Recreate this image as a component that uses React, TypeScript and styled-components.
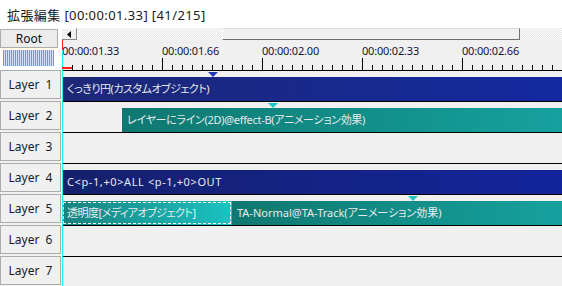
import React from "react"
import styled, { createGlobalStyle } from "styled-components"

const GlobalStyle = createGlobalStyle`
	html, body {
		margin: 0;
		padding: 0;
		background: #f0f0f0;
	}
	body {
		font-family: "Noto Sans", "Noto Sans CJK JP", sans-serif;
		font-size: 12px;
		color: #000;
	}
`

const Window = styled.div`
	position: relative;
	width: 562px;
	height: 286px;
	overflow: hidden;
	background: #f0f0f0;
	display: flex;
	flex-direction: column;
`

const TitleBar = styled.div`
	height: 28px;
	flex-shrink: 0;
	background: #fff;
	display: flex;
	align-items: center;
	padding-left: 7px;
	font-size: 13px;
	letter-spacing: 0.4px;
	color: #1a1a1a;
`

const Header = styled.div`
	display: grid;
	grid-template-columns: 62px 1fr;
	height: 42px;
	flex-shrink: 0;
`

const HeadLeft = styled.div`
	background: #fff;
	display: flex;
	flex-direction: column;
	padding-top: 1px;
`

const RootButton = styled.div`
	width: 58px;
	height: 19px;
	box-sizing: border-box;
	border: 1px solid #adadad;
	background: #ececec;
	display: flex;
	align-items: center;
	justify-content: center;
	font-size: 12px;
	color: #111;
`

const ScaleStripes = styled.div`
	margin: 2px 0 0 3px;
	width: 51px;
	height: 16px;
	background: repeating-linear-gradient(90deg, #6a9ae4 0 1px, #d6e3f7 1px 2px);
`

const HeadRight = styled.div`
	display: flex;
	flex-direction: column;
	background: #f0f0f0;
`

const ScrollBar = styled.div`
	height: 12px;
	display: flex;
	background: repeating-conic-gradient(#e9e9e9 0 25%, #fbfbfb 0 50%) 0 0 / 2px 2px;
`

const ArrowButton = styled.div`
	width: 15px;
	box-sizing: border-box;
	background: #f0f0f0;
	border-right: 1px solid #8a8a8a;
	border-bottom: 1px solid #8a8a8a;
	border-top: 1px solid #fff;
	display: flex;
	align-items: center;
	justify-content: center;
`

const Thumb = styled.div<{ $left: number; $width: number }>`
	margin-left: ${(p) => p.$left}px;
	width: ${(p) => p.$width}px;
	box-sizing: border-box;
	background: #f0f0f0;
	border-top: 1px solid #dcdcdc;
	border-left: 1px solid #fff;
	border-right: 1px solid #707070;
	border-bottom: 1px solid #707070;
`

const Ruler = styled.div`
	position: relative;
	height: 30px;
	background: #f0f0f0;
`

const LabelRow = styled.div`
	display: flex;
	padding-top: 4px;
`

const TimeLabel = styled.div`
	width: 100px;
	flex-shrink: 0;
	font-size: 11px;
	line-height: 14px;
	color: #14143a;
	letter-spacing: -0.2px;
`

const TickSvg = styled.svg`
	display: block;
	position: absolute;
	left: 0;
	bottom: 0;
`

const Body = styled.div`
	display: grid;
	grid-template-columns: 62px 1fr;
	flex: 1;
`

const LayerColumn = styled.div`
	display: flex;
	flex-direction: column;
`

const LayerHeader = styled.div`
	width: 61px;
	height: 29px;
	margin-bottom: 2px;
	box-sizing: border-box;
	border: 1px solid #acacac;
	background: #f0f0f0;
	display: flex;
	align-items: center;
	justify-content: center;
	white-space: pre;
	font-size: 12px;
	color: #1a1a1a;
`

const TrackColumn = styled.div`
	display: flex;
	flex-direction: column;
`

const Track = styled.div`
	position: relative;
	height: 31px;
	box-sizing: border-box;
	border-top: 1px solid #000;
	padding-top: 6px;
	display: flex;
	flex-shrink: 0;
`

type ClipProps = {
	$from: string
	$to: string
	$offset?: number
	$width?: number
	$selected?: boolean
	$tracking?: number
}

const Clip = styled.div<ClipProps>`
	height: 24px;
	margin-left: ${(p) => p.$offset || 0}px;
	${(p) => (p.$width ? `width: ${p.$width}px; flex-shrink: 0;` : "flex: 1;")}
	box-sizing: border-box;
	background: linear-gradient(to right, ${(p) => p.$from}, ${(p) => p.$to});
	color: #e6eaee;
	font-size: 11px;
	letter-spacing: ${(p) => (p.$tracking ?? -0.3)}px;
	line-height: 24px;
	padding-left: 5px;
	white-space: nowrap;
	overflow: hidden;
	font-feature-settings: "palt";
	${(p) => p.$selected && `outline: 1px dashed #fff; outline-offset: -2px;`}
`

const Marker = styled.svg<{ $at: number }>`
	position: absolute;
	top: 1px;
	left: ${(p) => p.$at}px;
`

const CursorLine = styled.div`
	position: absolute;
	left: 62px;
	top: 50px;
	bottom: 0;
	width: 1px;
	background: #22f0f0;
`

const CursorHead = styled.div`
	position: absolute;
	left: 62px;
	top: 40px;
	width: 1px;
	height: 10px;
	background: #ff2020;
`

const CursorFoot = styled.div`
	position: absolute;
	left: 62px;
	top: 67px;
	width: 10px;
	height: 2px;
	background: #ff2020;
`

const labels = ["00:00:01.33", "00:00:01.66", "00:00:02.00", "00:00:02.33", "00:00:02.66"]

const Ticks = () => {
	const lines = []
	for (let k = 1; k < 50; k++) {
		const x = k * 10 + 0.5
		const major = k % 10 === 0
		lines.push(<line key={k} x1={x} x2={x} y1={major ? 18 : 25} y2={30} stroke="#000" strokeWidth={1} />)
	}
	return (
		<TickSvg width={500} height={30}>
			{lines}
		</TickSvg>
	)
}

const Tri = ({ at, color }: { at: number; color: string }) => (
	<Marker $at={at} width={10} height={5} viewBox="0 0 10 5">
		<polygon points="0,0 10,0 5,5" fill={color} />
	</Marker>
)

const BLUE_FROM = "#1d2876"
const BLUE_TO = "#1429a0"
const TEAL_FROM = "#0f7870"
const TEAL_TO = "#16a19e"

const App = () => {
	return (
		<>
			<GlobalStyle />
			<Window>
				<TitleBar>拡張編集 [00:00:01.33] [41/215]</TitleBar>
				<Header>
					<HeadLeft>
						<RootButton>Root</RootButton>
						<ScaleStripes />
					</HeadLeft>
					<HeadRight>
						<ScrollBar>
							<ArrowButton>
								<svg width={4} height={7} viewBox="0 0 4 7">
									<polygon points="4,0 4,7 0,3.5" fill="#000" />
								</svg>
							</ArrowButton>
							<Thumb $left={145} $width={298} />
						</ScrollBar>
						<Ruler>
							<LabelRow>
								{labels.map((l) => (
									<TimeLabel key={l}>{l}</TimeLabel>
								))}
							</LabelRow>
							<Ticks />
						</Ruler>
					</HeadRight>
				</Header>
				<Body>
					<LayerColumn>
						{[1, 2, 3, 4, 5, 6, 7].map((n) => (
							<LayerHeader key={n}>{`Layer  ${n}`}</LayerHeader>
						))}
					</LayerColumn>
					<TrackColumn>
						<Track>
							<Tri at={146} color="#2234b8" />
							<Clip $from={BLUE_FROM} $to={BLUE_TO} $tracking={-0.5}>
								くっきり円(カスタムオブジェクト)
							</Clip>
						</Track>
						<Track>
							<Tri at={206} color="#22c4c4" />
							<Clip $from={TEAL_FROM} $to={TEAL_TO} $offset={60}>
								レイヤーにライン(2D)@effect-B(アニメーション効果)
							</Clip>
						</Track>
						<Track />
						<Track>
							<Clip $from="#15216c" $to="#13249c" $tracking={0.6}>
								C&lt;p-1,+0&gt;ALL &lt;p-1,+0&gt;OUT
							</Clip>
						</Track>
						<Track>
							<Tri at={346} color="#22c4c4" />
							<Clip $from="#17827e" $to="#1bc2c2" $width={170} $selected $tracking={-0.5}>
								透明度[メディアオブジェクト]
							</Clip>
							<Clip $from={TEAL_FROM} $to={TEAL_TO} $tracking={0}>
								TA-Normal@TA-Track(アニメーション効果)
							</Clip>
						</Track>
						<Track />
						<Track />
					</TrackColumn>
				</Body>
				<CursorHead />
				<CursorLine />
				<CursorFoot />
			</Window>
		</>
	)
}

export default App
